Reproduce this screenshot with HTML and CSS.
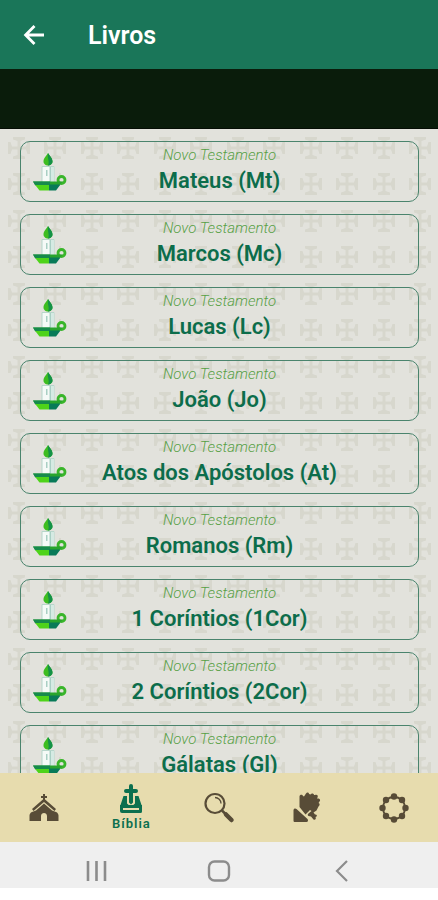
FILE: index.html
```html
<!DOCTYPE html>
<html lang="pt-BR">
<head>
<meta charset="utf-8">
<meta name="viewport" content="width=device-width, initial-scale=1">
<title>Livros</title>
<link rel="stylesheet" href="styles.css">
</head>
<body>
<header class="app-bar">
  <button class="back" type="button" aria-label="Voltar">
    <svg width="24" height="24" viewBox="0 0 24 24" fill="none" stroke="currentColor" stroke-width="2.800"><path d="M22 12H4M12.500 3 3.600 12l8.900 9"/></svg>
  </button>
  <h1 class="title">Livros</h1>
</header>
<div class="banner"></div>
<main class="content">
  <svg class="backdrop" width="100%" height="100%" aria-hidden="true">
    <defs>
      <g id="cross">
        <path d="M-6-11H6v2.500L1.500-7v5.500H7L8.500-6H11V6H8.500L7 1.500H1.500V7L6 8.500V11H-6V8.500L-1.500 7V1.500H-7L-8.500 6H-11V-6h2.500L-7-1.500h5.500V-7L-6-8.500z"/>
      </g>
      <pattern id="crosses" width="73" height="73" patternUnits="userSpaceOnUse">
        <use href="#cross" x="19" y="19"/><use href="#cross" x="55" y="19"/>
        <use href="#cross" x="19" y="55"/><use href="#cross" x="55" y="55"/>
      </pattern>
      <symbol id="candle" viewBox="0 0 36 42">
        <path fill="#e2e2dc" d="M9 12h18v10h9v20H0V22h9z"/>
        <path fill="#f5faf7" stroke="#b7d6cb" d="M10 13.500h12V30H10z"/>
        <path fill="#a9cfc4" d="M17.500 14h1.500v16h-1.500zM14 17h1.500v6H14z"/>
        <path fill="#d5eae3" d="M19 14h2.500v16H19z"/>
        <path fill="#3dbd20" d="M16 0c1.500 3 4.500 5 4.500 8.500 0 2.500-2.500 4-4.500 4s-4.500-1.500-4.500-4C11.500 5 14.500 3 16 0z"/>
        <path fill="#149148" d="M16 0c1.500 3 4.500 5 4.500 8.500 0 2.500-2.500 4-4.500 4 2-4-1-7 0-12.500z"/>
        <circle cx="29.500" cy="27" r="3.500" fill="none" stroke="#39b52a" stroke-width="2.800"/>
        <path fill="#28a42d" d="M1 28.500h30l-4 4H3.500z"/>
        <path fill="#168a4c" d="M1 28.500h17V32H3z"/>
        <path fill="#4ed31a" d="M3.200 32H17v5.500H7.500z"/>
        <path fill="#087a58" d="M17 31.500h11.500l-4.500 6h-7z"/>
      </symbol>
    </defs>
    <rect width="100%" height="100%" fill="url(#crosses)"/>
  </svg>
  <ul class="books">
    <li><a class="book" href="#mt"><svg class="candle" aria-hidden="true"><use href="#candle"/></svg><span class="part">Novo Testamento</span><span class="name">Mateus (Mt)</span></a></li>
    <li><a class="book" href="#mc"><svg class="candle" aria-hidden="true"><use href="#candle"/></svg><span class="part">Novo Testamento</span><span class="name">Marcos (Mc)</span></a></li>
    <li><a class="book" href="#lc"><svg class="candle" aria-hidden="true"><use href="#candle"/></svg><span class="part">Novo Testamento</span><span class="name">Lucas (Lc)</span></a></li>
    <li><a class="book" href="#jo"><svg class="candle" aria-hidden="true"><use href="#candle"/></svg><span class="part">Novo Testamento</span><span class="name">João (Jo)</span></a></li>
    <li><a class="book" href="#at"><svg class="candle" aria-hidden="true"><use href="#candle"/></svg><span class="part">Novo Testamento</span><span class="name">Atos dos Apóstolos (At)</span></a></li>
    <li><a class="book" href="#rm"><svg class="candle" aria-hidden="true"><use href="#candle"/></svg><span class="part">Novo Testamento</span><span class="name">Romanos (Rm)</span></a></li>
    <li><a class="book" href="#1cor"><svg class="candle" aria-hidden="true"><use href="#candle"/></svg><span class="part">Novo Testamento</span><span class="name">1 Coríntios (1Cor)</span></a></li>
    <li><a class="book" href="#2cor"><svg class="candle" aria-hidden="true"><use href="#candle"/></svg><span class="part">Novo Testamento</span><span class="name">2 Coríntios (2Cor)</span></a></li>
    <li><a class="book" href="#gl"><svg class="candle" aria-hidden="true"><use href="#candle"/></svg><span class="part">Novo Testamento</span><span class="name">Gálatas (Gl)</span></a></li>
  </ul>
</main>
<nav class="tabs">
  <a class="tab" href="#inicio" aria-label="Início">
    <svg width="32" height="32" viewBox="0 0 32 32" fill="currentColor">
      <path d="M15 2h2v2h2v2h-2v3h-2V6h-2V4h2z"/>
      <path d="M16 6.500 28 17l-1.500 2L16 10 5.500 19 4 17z"/>
      <path d="M16 11.500l8 7 4 1.500c1.500.6 2.500 2 2.500 3.500V29H19v-5c0-4-6-4-6 0v5H1.500v-5.500c0-1.500 1-2.900 2.500-3.500l4-1.500z"/>
    </svg>
  </a>
  <a class="tab active" href="#biblia" aria-current="page">
    <svg width="32" height="32" viewBox="0 0 32 32" fill="currentColor">
      <path d="M14 3a2 2 0 0 1 4 0v3h3a2 2 0 0 1 0 4h-3v9.500l-2 2-2-2V10h-3a2 2 0 0 1 0-4h3z"/>
      <path d="M8.500 13H12v7.500l4 3.500 4-3.500V13h3.500L27 23.500H5z"/>
      <path fill-rule="evenodd" d="M5 22h22v6.500a1.500 1.500 0 0 1-1.500 1.500H7a2 2 0 0 1-2-2zM8 25v2h16v-2z"/>
    </svg>
    <span class="label">Bíblia</span>
  </a>
  <a class="tab" href="#busca" aria-label="Buscar">
    <svg width="32" height="32" viewBox="0 0 32 32" fill="none" stroke="currentColor">
      <circle cx="12" cy="11.500" r="9.500" stroke-width="2.200"/>
      <path stroke-width="1.300" d="M12 5.500a6 6 0 0 1 6 6"/>
      <path stroke-width="2.500" d="m19 18.500 4 4"/>
      <path stroke-width="4.500" stroke-linecap="round" d="m23 22.500 5.500 5.500"/>
    </svg>
  </a>
  <a class="tab" href="#oracoes" aria-label="Orações">
    <svg width="32" height="32" viewBox="0 0 32 32" fill="currentColor">
      <path d="M2.500 18c0-1.500 2-2 3-1l11 10c1 1 .5 3-1 3H4c-1 0-1.500-.5-1.500-1.500z"/>
      <path d="M8.500 15 8.500 4.500c0-2 3-2.500 3.500-.5l1 .5 2-3c1-1.500 3-1 3 .5l1.500.5c1-1.500 3.500-1 3.500.5h1c2-1 3.500.5 2.500 2.500l-.5 1c2.500-.5 4 1.500 2.500 3l-1 1.500c1.500.5 1.500 2.500 0 3.500l-2 4-3 2 1.500 2c1.500-.5 2.500 1 1.500 2l-1 .5c1 2-.5 3.500-2 2.500l-2.500-3-2.500-.5c-1-.5-1-2 0-2.500l3-2.500-1.500-1-4.500 4.500z"/>
    </svg>
  </a>
  <a class="tab" href="#terco" aria-label="Terço">
    <svg width="32" height="32" viewBox="0 0 32 32" fill="currentColor">
      <circle cx="16" cy="16" r="11" fill="none" stroke="currentColor" stroke-width="1.800"/>
      <circle cx="16" cy="4.500" r="3.200"/><circle cx="24" cy="8" r="3.200"/><circle cx="27.500" cy="16" r="3.200"/><circle cx="24" cy="24" r="3.200"/>
      <circle cx="16" cy="27.500" r="3.200"/><circle cx="8" cy="24" r="3.200"/><circle cx="4.500" cy="16" r="3.200"/><circle cx="8" cy="8" r="3.200"/>
    </svg>
  </a>
</nav>
<footer class="system">
  <button type="button" aria-label="Recentes"><svg width="24" height="24" viewBox="0 0 24 24" fill="none" stroke="currentColor" stroke-width="2.600"><path d="M4 2v20M12.500 2v20M21 2v20"/></svg></button>
  <button type="button" aria-label="Tela inicial"><svg width="24" height="24" viewBox="0 0 24 24" fill="none" stroke="currentColor" stroke-width="2.400"><rect x="2" y="2.500" width="20" height="19" rx="5.500"/></svg></button>
  <button type="button" aria-label="Voltar"><svg width="24" height="24" viewBox="0 0 24 24" fill="none" stroke="currentColor" stroke-width="2.200"><path d="M17 2 7 12l10 10"/></svg></button>
</footer>
</body>
</html>
```
FILE: styles.css
```css
* {
  box-sizing: border-box;
}

body {
  margin: 0;
  height: 100vh;
  padding-bottom: 12px;
  display: flex;
  flex-direction: column;
  background: #fff;
  font-family: Roboto, "Liberation Sans", sans-serif;
}

button {
  padding: 0;
  border: 0;
  background: none;
  color: inherit;
}

svg {
  display: block;
}

.app-bar {
  flex: none;
  display: flex;
  align-items: center;
  gap: 42px;
  height: 69px;
  padding: 0 22px;
  background: #1a7659;
  color: #fff;
}

.title {
  margin: 0;
  padding-top: 2px;
  font-size: 25px;
  line-height: 28px;
  font-weight: 600;
}

.banner {
  flex: none;
  height: 60px;
  background: #0a1c0b;
  border-bottom: 1px solid #050d05;
}

.content {
  position: relative;
  flex: 1;
  min-height: 0;
  overflow: hidden;
  background: #e2e2dc;
}

.backdrop {
  position: absolute;
  inset: 0;
  fill: #d7d7cd;
}

.books {
  position: relative;
  display: grid;
  gap: 12px;
  margin: 0;
  padding: 12px 19px 12px 20px;
  list-style: none;
}

.book {
  display: grid;
  grid-template-columns: 36px 1fr 36px;
  grid-template-rows: 22px 28px;
  align-content: start;
  column-gap: 8px;
  height: 61px;
  padding: 3px 11px;
  border: 1px solid #4a846d;
  border-radius: 10px;
  text-align: center;
  text-decoration: none;
}

.candle {
  grid-row: 1 / 3;
  align-self: end;
  width: 36px;
  height: 42px;
}

.part,
.name {
  grid-column: 2;
  white-space: nowrap;
}

.part {
  font-size: 15px;
  line-height: 20px;
  font-style: italic;
  font-weight: 300;
  color: #57a045;
}

.name {
  font-size: 22px;
  line-height: 28px;
  font-weight: 600;
  color: #0c6d4b;
}

.tabs {
  flex: none;
  display: grid;
  grid-template-columns: repeat(5, 1fr);
  height: 69px;
  background: #e7dcae;
}

.tab {
  display: flex;
  flex-direction: column;
  align-items: center;
  justify-content: center;
  color: #584c37;
  text-decoration: none;
}

.tab.active {
  color: #0c704f;
}

.label {
  font-size: 13px;
  line-height: 18px;
  font-weight: 600;
  letter-spacing: 1px;
}

.system {
  flex: none;
  display: flex;
  align-items: flex-end;
  justify-content: center;
  gap: 99px;
  height: 46px;
  padding-bottom: 5px;
  background: #efefef;
  color: #8c8c8c;
}
```
